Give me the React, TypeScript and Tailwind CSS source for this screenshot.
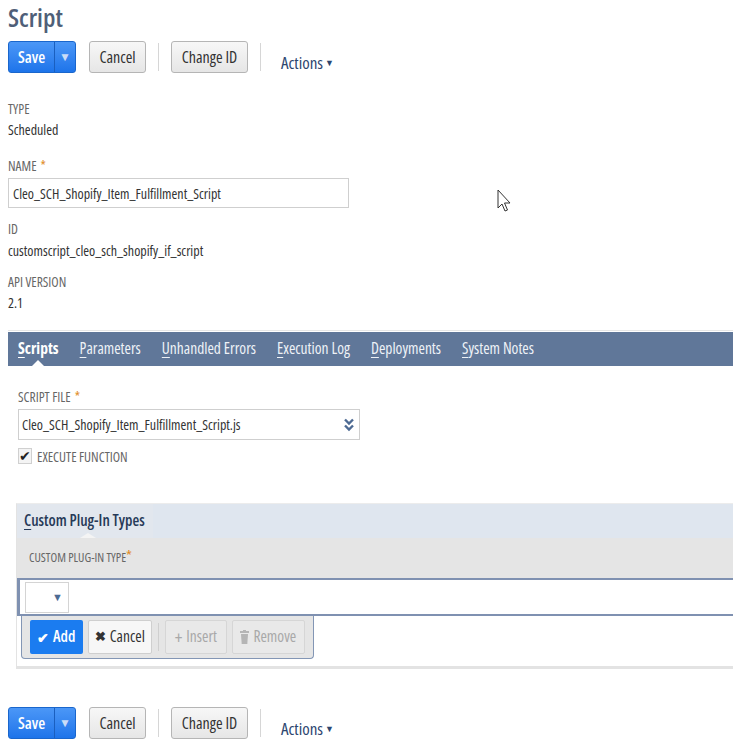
import { useState } from 'react'

const font = "font-['Open_Sans',sans-serif] [font-stretch:75%]"

function SplitSave() {
  return (
    <div className="flex h-[32px] overflow-hidden rounded-[3px] border border-[#1a66cc] bg-gradient-to-b from-[#4b97f7] to-[#1d74ea] text-white">
      <span className="flex w-[45px] items-center justify-center text-[16px] font-semibold">Save</span>
      <span className="flex w-[21px] items-center justify-center border-l border-[#1a5fbf] text-[12px] text-[#c9dcf7]">▼</span>
    </div>
  )
}

function GrayButton({ label, width }: { label: string; width: string }) {
  return (
    <button
      className={`flex h-[32px] ${width} items-center justify-center rounded-[3px] border border-[#b5b5b5] bg-gradient-to-b from-[#f7f7f7] to-[#e6e6e6] text-[16px] text-[#333]`}
    >
      {label}
    </button>
  )
}

function ButtonBar() {
  return (
    <div className="flex items-center">
      <SplitSave />
      <div className="ml-[13px]">
        <GrayButton label="Cancel" width="w-[57px]" />
      </div>
      <div className="mx-[12px] h-[28px] w-px bg-[#d6d6d6]" />
      <GrayButton label="Change ID" width="w-[77px]" />
      <div className="mx-[12px] h-[28px] w-px bg-[#d6d6d6]" />
      <span className="ml-[8px] flex h-[32px] items-center pt-[12px] text-[17px] text-[#2d4670]">
        Actions<span className="ml-[2px] text-[9px]">▼</span>
      </span>
    </div>
  )
}

function Label({ text, required }: { text: string; required?: boolean }) {
  return (
    <div className="text-[13.5px] uppercase leading-[16px] text-[#666]">
      {text}
      {required && <span className="ml-[4px] text-[#e08a1e]">*</span>}
    </div>
  )
}

function Value({ text }: { text: string }) {
  return <div className="text-[14px] leading-[18px] text-[#333]">{text}</div>
}

const tabs = ['Scripts', 'Parameters', 'Unhandled Errors', 'Execution Log', 'Deployments', 'System Notes']

function Tabs() {
  const [active, setActive] = useState(0)
  return (
    <div className="mt-[18px] border-t border-[#e6e6e6] pt-[1px]">
      <div className="flex h-[34px] items-center gap-[21px] bg-[#607799] pl-[10px]">
        {tabs.map((t, i) => (
          <button
            key={t}
            onClick={() => setActive(i)}
            className={`relative flex h-full items-center text-[15.5px] ${i === active ? 'font-bold text-white' : 'text-[#eef2f7]'}`}
          >
            <span className="underline decoration-1 underline-offset-[3px] [text-decoration-skip-ink:none]">{t[0]}</span>
            {t.slice(1)}
            {i === active && (
              <span className="absolute bottom-0 left-1/2 h-0 w-0 -translate-x-1/2 border-x-[6px] border-b-[6px] border-x-transparent border-b-white" />
            )}
          </button>
        ))}
      </div>
    </div>
  )
}

function DoubleChevron() {
  return (
    <svg width="10" height="14" viewBox="0 0 10 14" fill="none" stroke="#4d6a93" strokeWidth="2.4">
      <path d="M1 1.5 L5 5.5 L9 1.5" />
      <path d="M1 7.5 L5 11.5 L9 7.5" />
    </svg>
  )
}

function Sublist() {
  return (
    <div className="ml-[16px] mt-[39px] border-b-[3px] border-l border-t border-b-[#e3e3e3] border-l-[#e3e3e3] border-t-[#ececec]">
      <div className="flex h-[34px] bg-[#dfe6ef]">
        <div className="relative flex w-[136px] items-center bg-[#e2e7ee] pl-[7px] text-[15.5px] font-semibold text-[#273a58]">
          <span className="underline decoration-1 underline-offset-[3px]">C</span>ustom Plug-In Types
          <span className="absolute bottom-0 left-[63px] h-0 w-0 border-x-[8px] border-b-[5px] border-x-transparent border-b-[#f4f4f4]" />
        </div>
      </div>
      <div className="flex h-[40px] items-center bg-[#e5e5e5] pl-[12px] text-[12.3px] uppercase text-[#666]">
        Custom Plug-In Type<span className="-mt-[6px] text-[15px] text-[#e08a1e]">*</span>
      </div>
      <div className="flex h-[38px] items-center border-y-2 border-l-[3px] border-[#7f91b1] bg-white pl-[5px]">
        <div className="flex h-[31px] w-[44px] items-center justify-end border border-[#d4d4d4] pr-[5px] text-[11px] text-[#4d6a93]">
          ▼
        </div>
      </div>
      <div className="flex pb-[7px]">
        <div className="ml-[4px] flex w-[293px] items-center gap-[5px] rounded-b-[4px] border-x border-b border-[#8396b5] bg-[#e5e5e5] px-[8px] pb-[4px] pt-[4px]">
          <button className="flex h-[34px] w-[53px] items-center justify-center gap-[4px] rounded-[2px] bg-[#1b7cf0] text-[15.5px] font-semibold text-white">
            <span className="text-[14px]">✔</span>Add
          </button>
          <button className="flex h-[34px] w-[65px] items-center justify-center gap-[4px] rounded-[2px] border border-[#cfcfcf] bg-[#f7f7f7] text-[15.5px] text-[#333]">
            <span className="text-[13px] font-bold">✖</span>Cancel
          </button>
          <div className="mx-[1px] h-[28px] w-px bg-[#cfcfcf]" />
          <button className="flex h-[34px] w-[62px] items-center justify-center gap-[4px] rounded-[2px] border border-[#d6d6d6] bg-[#e9e9e9] text-[15.5px] text-[#a8a8a8]">
            <span className="text-[18px] leading-none">+</span>Insert
          </button>
          <button className="flex h-[34px] w-[74px] items-center justify-center gap-[4px] rounded-[2px] border border-[#d6d6d6] bg-[#e9e9e9] text-[15.5px] text-[#a8a8a8]">
            <svg width="9" height="14" viewBox="0 0 9 14" fill="#b5b5b5">
              <rect x="0" y="1" width="9" height="2" />
              <rect x="3" y="0" width="3" height="1" />
              <path d="M1 4 H8 L7.3 14 H1.7 Z" />
            </svg>
            Remove
          </button>
        </div>
      </div>
    </div>
  )
}

function Cursor() {
  return (
    <svg className="absolute left-[497px] top-[189px]" width="14" height="26" viewBox="0 0 14 26">
      <path d="M1 1 L1 19 L5 15 L8 22 L10.5 21 L7.5 14 L13 14 Z" fill="white" stroke="#333" strokeWidth="1" strokeLinejoin="round" />
    </svg>
  )
}

export default function App() {
  return (
    <div className={`relative h-[741px] w-[733px] overflow-hidden bg-white ${font}`}>
      <div className="pl-[8px]">
        <h1 className="text-[26px] font-semibold leading-[35px] text-[#4f5f78]">Script</h1>
        <div className="mt-[6px]">
          <ButtonBar />
        </div>
        <div className="mt-[28px] space-y-[4px]">
          <Label text="Type" />
          <Value text="Scheduled" />
        </div>
        <div className="mt-[19px]">
          <Label text="Name" required />
          <div className="mt-[4px] flex h-[30px] w-[341px] items-center border border-[#cfcfcf] px-[4px] text-[14px] text-[#333]">
            Cleo_SCH_Shopify_Item_Fulfillment_Script
          </div>
        </div>
        <div className="mt-[13px] space-y-[5px]">
          <Label text="ID" />
          <Value text="customscript_cleo_sch_shopify_if_script" />
        </div>
        <div className="mt-[14px] space-y-[4px]">
          <Label text="API Version" />
          <Value text="2.1" />
        </div>
        <Tabs />
      </div>
      <div className="pl-[18px] pt-[23px]">
        <Label text="Script File" required />
        <div className="mt-[4px] flex h-[31px] w-[342px] items-center justify-between border border-[#cfcfcf] pl-[3px] pr-[5px] text-[14px] text-[#333]">
          Cleo_SCH_Shopify_Item_Fulfillment_Script.js
          <DoubleChevron />
        </div>
        <div className="mt-[8px] flex items-end gap-[5px]">
          <div className="flex h-[16px] w-[14px] items-center justify-center border border-[#d0d0d0] bg-[#f4f4f4] text-[14px] leading-none text-[#222]">
            ✔
          </div>
          <span className="text-[13.5px] uppercase leading-[14px] text-[#666]">Execute Function</span>
        </div>
      </div>
      <Sublist />
      <div className="mt-[38px] pl-[8px]">
        <ButtonBar />
      </div>
      <Cursor />
    </div>
  )
}
